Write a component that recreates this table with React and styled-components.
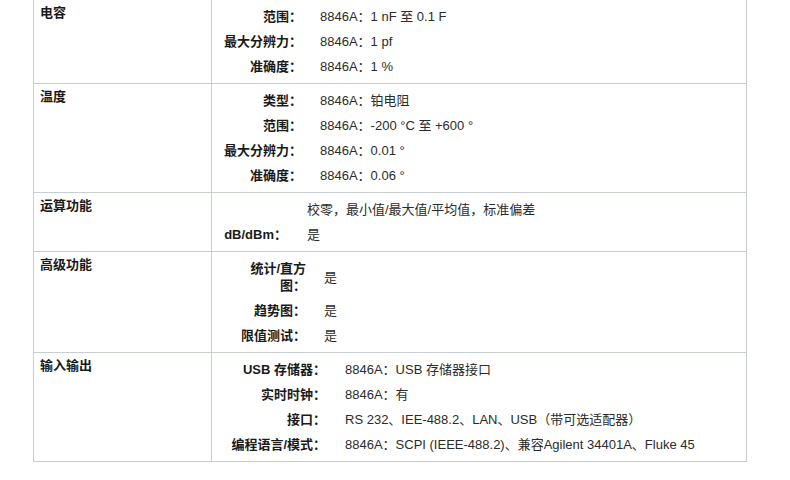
import React from "react";
import styled, { createGlobalStyle } from "styled-components";

const GlobalStyle = createGlobalStyle`
  html, body {
    margin: 0;
    padding: 0;
    background: #ffffff;
  }
  body {
    font-family: "Liberation Sans", Arial, "Noto Sans CJK SC", sans-serif;
    font-size: 13px;
    color: #333333;
  }
`;

const Frame = styled.div`
  margin-left: 33px;
  width: 714px;
  box-sizing: border-box;
  border-left: 1px solid #c9ced3;
  border-right: 1px solid #c9ced3;
  border-bottom: 1px solid #c9ced3;
`;

const Section = styled.div`
  display: grid;
  grid-template-columns: 178px 1fr;
  border-top: ${(p) => (p.$first ? "none" : "1px solid #c9ced3")};
`;

const Category = styled.div`
  padding: 4px 6px;
  line-height: 17px;
  font-weight: bold;
  color: #1a1a1a;
  border-right: 1px solid #c9ced3;
`;

const Specs = styled.div`
  padding: 4px 0;
`;

const SpecGrid = styled.div`
  display: grid;
  grid-template-columns: ${(p) => p.$labelW}px max-content;
  column-gap: ${(p) => p.$gap}px;
  padding-left: ${(p) => p.$offset}px;
  align-items: center;
`;

const Label = styled.div`
  padding: 4px 0;
  line-height: 17px;
  font-weight: bold;
  color: #1a1a1a;
  text-align: right;
  white-space: ${(p) => (p.$wrap ? "normal" : "nowrap")};
`;

const Value = styled.div`
  padding: 4px 0;
  line-height: 17px;
  color: #2b2b2b;
  white-space: nowrap;
`;

const data = [
  {
    name: "电容",
    labelW: 78,
    gap: 18,
    offset: 12,
    rows: [
      ["范围：", "8846A：1 nF 至 0.1 F"],
      ["最大分辨力：", "8846A：1 pf"],
      ["准确度：", "8846A：1 %"],
    ],
  },
  {
    name: "温度",
    labelW: 78,
    gap: 18,
    offset: 12,
    rows: [
      ["类型：", "8846A：铂电阻"],
      ["范围：", "8846A：-200 °C 至 +600 °"],
      ["最大分辨力：", "8846A：0.01 °"],
      ["准确度：", "8846A：0.06 °"],
    ],
  },
  {
    name: "运算功能",
    labelW: 63,
    gap: 20,
    offset: 12,
    rows: [
      ["", "校零，最小值/最大值/平均值，标准偏差"],
      ["dB/dBm：", "是"],
    ],
  },
  {
    name: "高级功能",
    labelW: 67,
    gap: 18,
    offset: 27,
    wrap: true,
    rows: [
      ["统计/直方图：", "是"],
      ["趋势图：", "是"],
      ["限值测试：", "是"],
    ],
  },
  {
    name: "输入输出",
    labelW: 95,
    gap: 19,
    offset: 19,
    rows: [
      ["USB 存储器：", "8846A：USB 存储器接口"],
      ["实时时钟：", "8846A：有"],
      ["接口：", "RS 232、IEE-488.2、LAN、USB（带可选适配器）"],
      ["编程语言/模式：", "8846A：SCPI (IEEE-488.2)、兼容Agilent 34401A、Fluke 45"],
    ],
  },
];

export default function App() {
  return (
    <>
      <GlobalStyle />
      <Frame>
        {data.map((sec, i) => (
          <Section key={sec.name} $first={i === 0}>
            <Category>{sec.name}</Category>
            <Specs>
              <SpecGrid $labelW={sec.labelW} $gap={sec.gap} $offset={sec.offset}>
                {sec.rows.map(([label, value], j) => (
                  <React.Fragment key={j}>
                    <Label $wrap={sec.wrap}>{label}</Label>
                    <Value>{value}</Value>
                  </React.Fragment>
                ))}
              </SpecGrid>
            </Specs>
          </Section>
        ))}
      </Frame>
    </>
  );
}
